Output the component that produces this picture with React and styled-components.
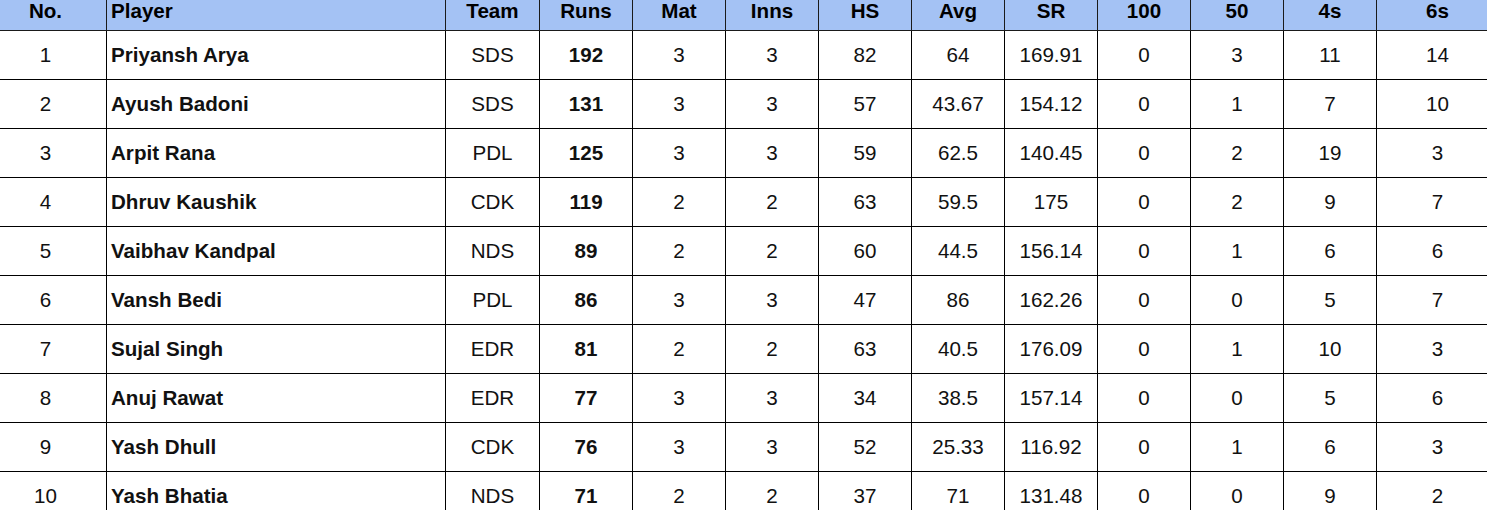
import React from "react";
import styled, { createGlobalStyle } from "styled-components";

const GlobalStyle = createGlobalStyle`
  html, body {
    margin: 0;
    padding: 0;
    background: #ffffff;
    overflow: hidden;
  }
  body {
    font-family: "Liberation Sans", Arial, sans-serif;
    color: #000;
  }
`;

const Wrapper = styled.div`
  margin-top: -8px;
  margin-left: -16px;
  width: 1514px;
`;

const Table = styled.table`
  border-collapse: collapse;
  table-layout: fixed;
  width: 1514px;
  font-family: "Liberation Sans", Arial, sans-serif;
  font-size: 20.6px;
`;

const HeadCell = styled.th`
  background: #a4c2f4;
  height: 38px;
  padding: 0 4px;
  font-weight: 700;
  text-align: ${(p) => (p.$left ? "left" : "center")};
  border: 1px solid #1a1a1a;
  border-top: none;
  white-space: nowrap;
  overflow: hidden;
`;

const Row = styled.tr`
  height: 49px;
`;

const Cell = styled.td`
  padding: 0 4px;
  text-align: ${(p) => (p.$left ? "left" : "center")};
  font-weight: ${(p) => (p.$bold ? 700 : 400)};
  border: 1px solid #000;
  white-space: nowrap;
  overflow: hidden;
  color: #111;
`;

const columns = [
  { key: "no", label: "No.", width: 122 },
  { key: "player", label: "Player", width: 339, left: true, bold: true },
  { key: "team", label: "Team", width: 94 },
  { key: "runs", label: "Runs", width: 93, bold: true },
  { key: "mat", label: "Mat", width: 93 },
  { key: "inns", label: "Inns", width: 93 },
  { key: "hs", label: "HS", width: 93 },
  { key: "avg", label: "Avg", width: 93 },
  { key: "sr", label: "SR", width: 93 },
  { key: "h", label: "100", width: 93 },
  { key: "f", label: "50", width: 93 },
  { key: "fours", label: "4s", width: 93 },
  { key: "sixes", label: "6s", width: 122 },
];

const rows = [
  [1, "Priyansh Arya", "SDS", 192, 3, 3, 82, "64", "169.91", 0, 3, 11, 14],
  [2, "Ayush Badoni", "SDS", 131, 3, 3, 57, "43.67", "154.12", 0, 1, 7, 10],
  [3, "Arpit Rana", "PDL", 125, 3, 3, 59, "62.5", "140.45", 0, 2, 19, 3],
  [4, "Dhruv Kaushik", "CDK", 119, 2, 2, 63, "59.5", "175", 0, 2, 9, 7],
  [5, "Vaibhav Kandpal", "NDS", 89, 2, 2, 60, "44.5", "156.14", 0, 1, 6, 6],
  [6, "Vansh Bedi", "PDL", 86, 3, 3, 47, "86", "162.26", 0, 0, 5, 7],
  [7, "Sujal Singh", "EDR", 81, 2, 2, 63, "40.5", "176.09", 0, 1, 10, 3],
  [8, "Anuj Rawat", "EDR", 77, 3, 3, 34, "38.5", "157.14", 0, 0, 5, 6],
  [9, "Yash Dhull", "CDK", 76, 3, 3, 52, "25.33", "116.92", 0, 1, 6, 3],
  [10, "Yash Bhatia", "NDS", 71, 2, 2, 37, "71", "131.48", 0, 0, 9, 2],
];

export default function App() {
  return (
    <>
      <GlobalStyle />
      <Wrapper>
        <Table>
          <colgroup>
            {columns.map((c) => (
              <col key={c.key} style={{ width: c.width }} />
            ))}
          </colgroup>
          <thead>
            <tr>
              {columns.map((c) => (
                <HeadCell key={c.key} $left={c.left}>
                  {c.label}
                </HeadCell>
              ))}
            </tr>
          </thead>
          <tbody>
            {rows.map((r) => (
              <Row key={r[0]}>
                {r.map((v, i) => (
                  <Cell key={i} $left={columns[i].left} $bold={columns[i].bold}>
                    {v}
                  </Cell>
                ))}
              </Row>
            ))}
          </tbody>
        </Table>
      </Wrapper>
    </>
  );
}
